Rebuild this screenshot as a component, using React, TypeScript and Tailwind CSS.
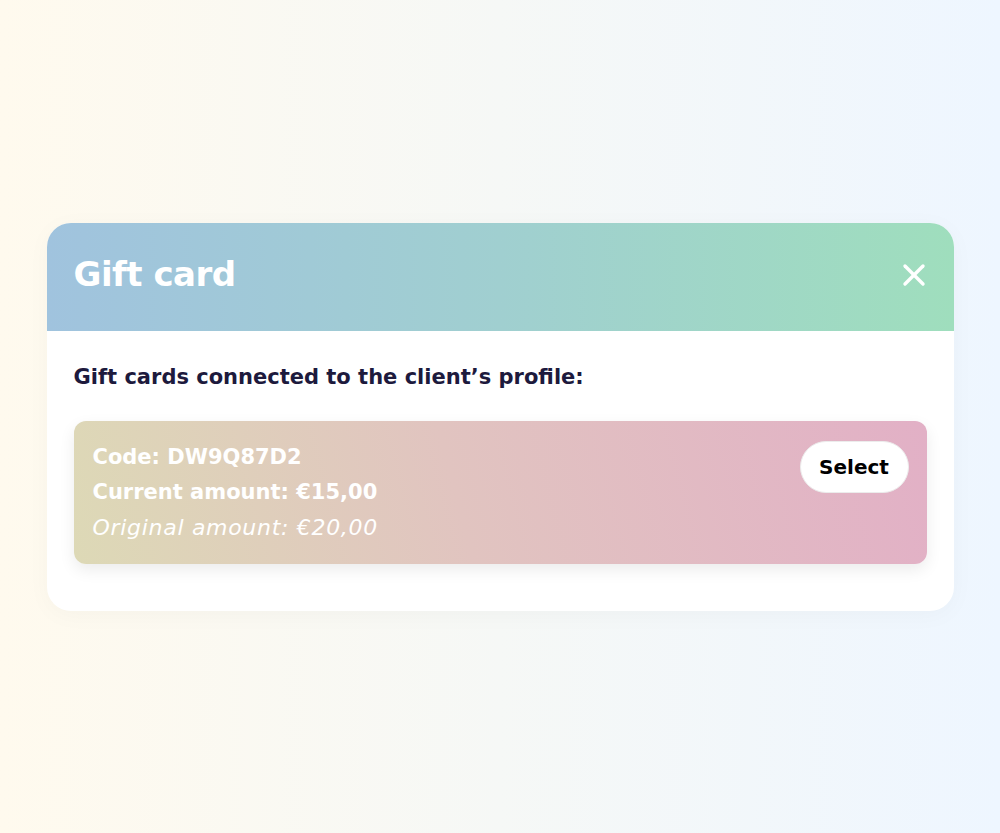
import React from "react";

function App() {
  return (
    <div
      className="min-h-screen w-full flex items-center justify-center bg-gradient-to-r from-[#fffaee] via-[#f6f8f6] to-[#eef6ff]"
      style={{ fontFamily: '"DejaVu Sans", "Noto Sans", sans-serif' }}
    >
      {/* Modal */}
      <div className="w-[907px] rounded-[24px] bg-white shadow-[0_4px_24px_rgba(0,0,0,0.03)] overflow-hidden">
        <div className="h-[108px] flex items-center justify-between pl-[27px] pr-[27px] bg-gradient-to-r from-[#a0c3de] via-[#a0cfd0] to-[#9fdebd]">
          <h1 className="text-[34px] font-bold text-white tracking-[-0.5px] -mt-[4px]">Gift card</h1>
          <button className="w-[26px] h-[26px] flex items-center justify-center cursor-pointer -mt-[4px]">
            <svg width="24" height="24" viewBox="0 0 24 24" fill="none" stroke="white" strokeWidth="3.4" strokeLinecap="round">
              <path d="M3 3 L21 21" />
              <path d="M21 3 L3 21" />
            </svg>
          </button>
        </div>

        <div className="px-[27px] pt-[30px] pb-[47px]">
          <p className="text-[21px] leading-[32px] font-bold text-[#1d1a3d]">
            Gift cards connected to the client’s profile:
          </p>

          <div className="mt-[28px] h-[143px] rounded-[12px] bg-[linear-gradient(75deg,#ddd9b6,#e1c4c0_45%,#e2b0c6)] shadow-[0_6px_16px_rgba(0,0,0,0.08)] flex justify-between pl-[19px] pr-[18px]">
            <div className="flex flex-col justify-center text-white leading-[35px]">
              <span className="text-[21px] font-bold">Code: DW9Q87D2</span>
              <span className="text-[21px] font-bold">Current amount: €15,00</span>
              <span className="text-[22px] italic font-normal tracking-[0.7px]">Original amount: €20,00</span>
            </div>
            <div className="pt-[20px]">
              <button className="h-[52px] w-[109px] rounded-full bg-white border border-[#ececec] text-black text-[20px] font-bold cursor-pointer">
                Select
              </button>
            </div>
          </div>
        </div>
      </div>
    </div>
  );
}

export default App;
